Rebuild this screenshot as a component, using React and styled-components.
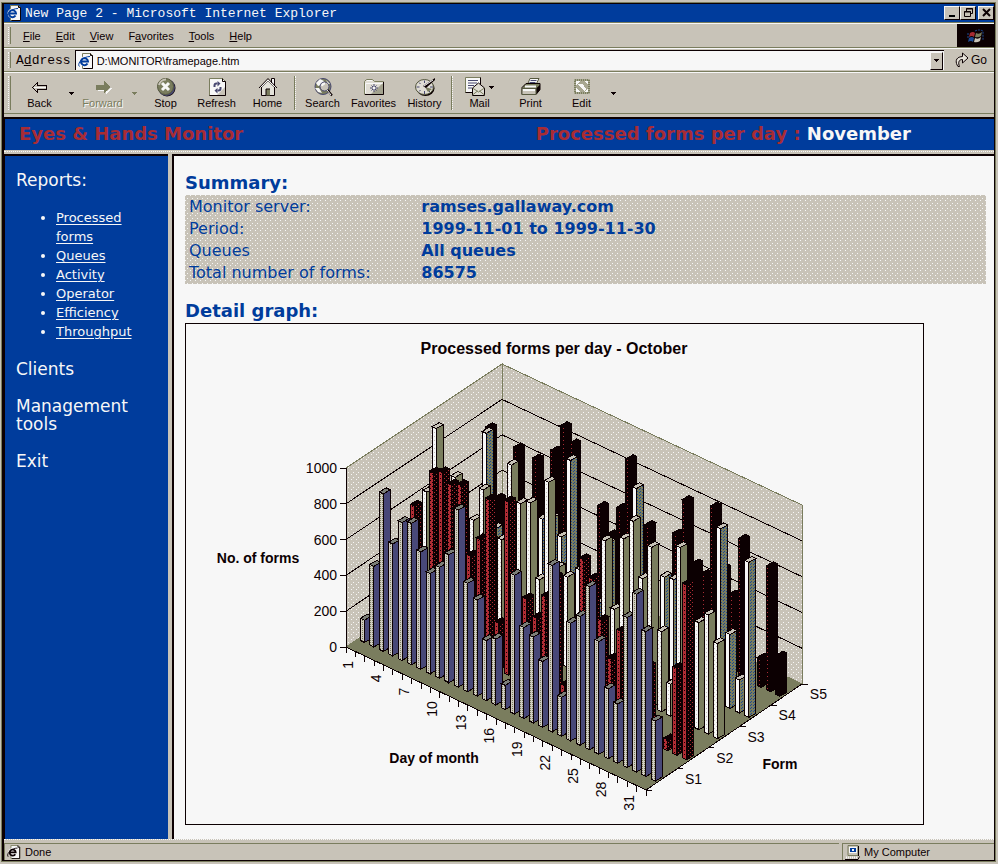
import React, { Component } from 'react';

import styled, { createGlobalStyle } from 'styled-components';

const series = [
  {
    name: "S1",
    front: "url(#mesh)",
    side: "#484878",
    top: "#7c7f78",
    values: [125, 450, 880, 625, 770, 790, 655, 560, 620, 715, 990, 605, 536, 335, 368, 135,
      775, 508, 480, 368, 930, 218, 657, 720, 910, 630, 390, 330, 838, 994, 810, 335]
  },
  {
    name: "S2",
    front: "url(#red)",
    side: "url(#darkRed)",
    top: "#0c0002",
    values: [0, 200, 693, 300, 927, 955, 910, 933, 564, 681, 927, 262, 966, 0, 475, 391,
      536, 670, 90, 0, 843, 760, 553, 363, 542, 0, 0, 419, 0, 61, 486, 977]
  },
  {
    name: "S3",
    front: "url(#paper)",
    side: "#7a7d5e",
    top: "#c8c3b8",
    values: [603, 983, 500, 760, 335, 570, 765, 500, 536, 978, 788, 816, 413, 983, 530, 503,
      0, 0, 0, 805, 447, 866, 989, 693, 894, 447, 179, 967, 0, 598, 665, 531]
  },
  {
    name: "S4",
    front: "#f7f7f7",
    side: "url(#sea)",
    top: "#c8c3b8",
    values: [0, 0, 368, 888, 380, 0, 0, 0, 0, 558, 587, 508, 961, 374, 0, 235,
      598, 0, 0, 978, 0, 0, 558, 570, 0, 156, 0, 0, 978, 413, 184, 866]
  },
  {
    name: "S5",
    front: "url(#ember)",
    side: "#0c0002",
    top: "#0c0002",
    values: [720, 352, 0, 682, 0, 670, 0, 765, 927, 855, 0, 0, 581, 447, 620, 916,
      0, 598, 0, 0, 626, 838, 508, 475, 877, 559, 436, 771, 0, 156, 693, 218]
  }
];

// chart geometry, the floor starts in its left corner
const left = 160;
const floor = 323;
const wall = 179;
const backWall = 177;
const days = 32;
const dayX = 300 / days;
const dayY = 143 / days;
const rowX = 31.2;
const rowY = -21.2;

const at = (day, row) => [left + day * dayX + row * rowX, floor + day * dayY + row * rowY];
const pts = list => list.map(p => p.join(",")).join(" ");

const Bar = ({ day, row, value, look }) => {
  const [cx, cy] = at(day, row);
  const x = cx + 14.5;
  const y = cy - 6.5;
  const h = value * wall / 1000;
  return (
    <g stroke="#0c0002">
      <polygon fill={look.side} points={pts([[x + 4, y + 2], [x + 11, y - 2], [x + 11, y - 2 - h], [x + 4, y + 2 - h]])} />
      <polygon fill={look.front} points={pts([[x, y], [x + 4, y + 2], [x + 4, y + 2 - h], [x, y - h]])} />
      <polygon fill={look.top} points={pts([[x, y - h], [x + 4, y + 2 - h], [x + 11, y - 2 - h], [x + 7, y - 4 - h]])} />
    </g>
  );
};

const Dots = ({ id, size, base, color, spots }) => (
  <pattern id={id} width={size} height={size} patternUnits="userSpaceOnUse">
    <rect width={size} height={size} fill={base} />
    {spots.map(([x, y]) => <rect key={x + "-" + y} x={x} y={y} width="1" height="1" fill={color} />)}
  </pattern>
);

const Chart = () => {
  const [bx, by] = at(0, 5);
  const [rx, ry] = at(days, 5);
  const [fx, fy] = at(days, 0);
  const ticks = [];
  for (let i = 0; i <= days; i++) ticks.push(i);

  return (
    <ChartSvg viewBox="0 0 737 500" role="img" aria-label="Processed forms per day">
      <defs>
        <Dots id="grain" size={5} base="#c8c3b8" color="#f7f7f7" spots={[[0, 0], [2, 3]]} />
        <Dots id="mesh" size={2} base="#d0ccc2" color="#7a7d5e" spots={[[0, 0]]} />
        <Dots id="red" size={4} base="#b02c34" color="#0c0002" spots={[[0, 0], [2, 2]]} />
        <Dots id="darkRed" size={4} base="#0c0002" color="#b02c34" spots={[[0, 0], [2, 2]]} />
        <Dots id="ember" size={4} base="#0c0002" color="#a82c34" spots={[[1, 0]]} />
        <Dots id="paper" size={4} base="#f7f7f7" color="#c8c3b8" spots={[[0, 0], [2, 2]]} />
        <Dots id="sea" size={3} base="#7a7d5e" color="#1c4a94" spots={[[0, 0], [1, 2]]} />
      </defs>

      <g shapeRendering="crispEdges">
        <polygon fill="url(#grain)" stroke="#7a7d5e"
          points={pts([[left, floor], [bx, by], [bx, by - backWall], [left, floor - wall]])} />
        <polygon fill="url(#grain)" stroke="#7a7d5e"
          points={pts([[bx, by], [rx, ry], [rx, ry - wall], [bx, by - backWall]])} />
        <polygon fill="#7a7d5e" points={pts([[left, floor], [bx, by], [rx, ry], [fx, fy]])} />
        {[200, 400, 600, 800].map(v => {
          const up = v * wall / 1000;
          return (
            <polyline key={v} fill="none" stroke="#0c0002"
              points={pts([[left, floor - up], [bx, by - v * backWall / 1000], [rx, ry - up]])} />
          );
        })}
        <polyline fill="none" stroke="#0c0002"
          points={pts([[left, floor - wall], [left, floor], [fx, fy], [rx, ry]])} />

        {[0, 200, 400, 600, 800, 1000].map(v => (
          <line key={v} x1={left - 6} x2={left} y1={floor - v * wall / 1000} y2={floor - v * wall / 1000} stroke="#0c0002" />
        ))}
        {ticks.map(i => {
          const [x, y] = at(i, 0);
          return <line key={i} x1={x} x2={x} y1={y} y2={y + 6} stroke="#0c0002" />;
        })}
        {[0, 1, 2, 3, 4, 5].map(i => {
          const [x, y] = at(days, i);
          return <line key={i} x1={x} x2={x + 6} y1={y} y2={y} stroke="#0c0002" />;
        })}

        {series.map((look, row) => ({ look, row })).reverse().map(({ look, row }) => (
          look.values.map((value, day) => (
            value > 0 && <Bar key={look.name + day} day={day} row={row} value={value} look={look} />
          ))
        ))}
      </g>

      {[0, 200, 400, 600, 800, 1000].map(v => (
        <ChartLabel key={v} x={left - 9} y={floor - v * wall / 1000 + 5} textAnchor="end">{v}</ChartLabel>
      ))}
      {[1, 4, 7, 10, 13, 16, 19, 22, 25, 28, 31].map(d => {
        const [x, y] = at(d - 1, 0);
        return (
          <ChartLabel key={d} textAnchor="end" transform={`translate(${x + 7} ${y + 14}) rotate(-90)`}>{d}</ChartLabel>
        );
      })}
      {series.map((s, i) => {
        const [x, y] = at(days, i);
        return <ChartLabel key={s.name} x={x + 39} y={y - 6}>{s.name}</ChartLabel>;
      })}

      <ChartTitle x="368" y="30" textAnchor="middle">Processed forms per day - October</ChartTitle>
      <AxisTitle x="72" y="239" textAnchor="middle">No. of forms</AxisTitle>
      <AxisTitle x="248" y="439" textAnchor="middle">Day of month</AxisTitle>
      <AxisTitle x="594" y="445" textAnchor="middle">Form</AxisTitle>
    </ChartSvg>
  );
};

const PageIcon = ({ size, ink }) => (
  <svg width={size} height={size} viewBox="0 0 16 16">
    <path d="M4.500 .5h8l2 2v13h-10z" fill="#f7f7f7" stroke="#7a7d5e" />
    <path d="M12.500 .5v2h2v13h-9" fill="none" stroke="#0c0002" />
    <circle cx="6.500" cy="8.500" r="5" fill="#f7f7f7" />
    <path d="M9.500 10.500A3.500 3.500 0 1 1 10 8.500H4" fill="none" stroke={ink || "#003c9c"} strokeWidth="2" />
    <path d="M1.500 13.500C-1.500 11 4.500 3.500 12 3.500" fill="none" stroke={ink || "#003c9c"} />
  </svg>
);

const BackIcon = () => (
  <Glyph viewBox="0 0 20 20" shapeRendering="crispEdges">
    <path d="M2.500 10.500l5-5v3h9v4h-9v3z" fill="#c8c3b8" stroke="#0c0002" />
    <path d="M4 10h12" stroke="#f7f7f7" />
  </Glyph>
);

const ForwardIcon = () => (
  <Glyph viewBox="0 0 20 20" shapeRendering="crispEdges">
    <path d="M18.500 11l-5 5v-3h-9" fill="none" stroke="#f7f7f7" />
    <path d="M17 10l-6-6v4H3v5h8v4z" fill="#7a7d5e" />
  </Glyph>
);

const StopIcon = () => (
  <Glyph viewBox="0 0 20 20">
    <circle cx="11" cy="11" r="8.500" fill="#0c0002" />
    <circle cx="10.500" cy="10.500" r="8.500" fill="#484870" />
    <circle cx="9.500" cy="9.500" r="8" fill="#7a7d5e" stroke="#56583f" />
    <path d="M3 8a7 7 0 0 1 7-5.500" stroke="#c8c3b8" strokeWidth="2" fill="none" />
    <path d="M6 6l7 7M13 6l-7 7" stroke="#f7f7f7" strokeWidth="3" />
  </Glyph>
);

const RefreshIcon = () => (
  <Glyph viewBox="0 0 20 20">
    <path d="M2.500 1.500h13l3 3v14h-16z" fill="#f7f7f7" stroke="#7a7d5e" />
    <path d="M10 18l8-8v8z" fill="#c8c3b8" />
    <path d="M15.500 1.500v3h3v14h-16" fill="none" stroke="#0c0002" />
    <path d="M7.500 10V8.500q0-2 2-2h1M13.500 10v1.500q0 2-2 2h-1" fill="none" stroke="#484870" strokeWidth="2" />
    <path d="M10.500 4l3 2.500-3 3zM10.500 11l-3 2.500 3 3z" fill="#484870" />
  </Glyph>
);

const HomeIcon = () => (
  <Glyph viewBox="0 0 20 20">
    <path d="M13.500 7V1.500h3V10" fill="#f7f7f7" stroke="#0c0002" />
    <path d="M3.500 10L10 3.500l6.500 6.500v8.500h-13z" fill="#e4e2da" stroke="#0c0002" />
    <path d="M1 11l9-9.500 9 9.500" fill="none" stroke="#0c0002" />
    <path d="M2.500 10.500L10 3l7.500 7.500" fill="none" stroke="#f7f7f7" />
    <rect x="8" y="12" width="4" height="6.500" fill="#7a7d5e" />
    <path d="M8 18v-6h4" fill="none" stroke="#0c0002" />
  </Glyph>
);

const SearchIcon = () => (
  <Glyph viewBox="0 0 20 20">
    <circle cx="10" cy="9.500" r="8" fill="#7a7d5e" stroke="#484870" />
    <path d="M3 6l4-4 4 2-2 4-4 1zM2 11l4 0 3 5-4-1zM13 3l4 4-2 0z" fill="#f7f7f7" />
    <circle cx="11.500" cy="9.500" r="4.500" fill="#c8c3b8" stroke="#484870" />
    <path d="M9 9a3 3 0 0 1 3-2.500" stroke="#f7f7f7" strokeWidth="2" fill="none" />
    <path d="M14.500 13l4.500 5.500" stroke="#0c0002" strokeWidth="2" />
    <path d="M14 13l4 5" stroke="#f7f7f7" />
  </Glyph>
);

const FavoritesIcon = () => (
  <Glyph viewBox="0 0 20 20">
    <path d="M.5 17.500V4.500l2-2h6l2 2h9v13z" fill="#e0ddd4" stroke="#7a7d5e" />
    <path d="M19 6v11H7z" fill="#a3a28e" />
    <path d="M1.500 16V6.500h17M3 3.500h5" fill="none" stroke="#f7f7f7" />
    <path d="M1 17.500h18.500V5" fill="none" stroke="#0c0002" />
    <path d="M10 7v8M6 11h8M7.500 8.500l5 5M12.500 8.500l-5 5" stroke="#484870" />
    <rect x="9" y="10" width="2" height="2" fill="#f7f7f7" />
  </Glyph>
);

const HistoryIcon = () => (
  <Glyph viewBox="0 0 20 20">
    <ellipse cx="10.500" cy="11.500" rx="9" ry="7.500" fill="#0c0002" />
    <ellipse cx="9.500" cy="10" rx="9" ry="7.500" fill="#e0ddd4" stroke="#56583f" />
    <path d="M9.500 3.500v2.500M1.500 10h3M15 10h3M9.500 14v3M4 5.500l1.500 1.500M15 15l-1.500-1.500M4 14.500L5.500 13" stroke="#484870" />
    <path d="M10 10l3 5 4-3z" fill="#7a7d5e" />
    <path d="M8 9l3 2 9-8V1z" fill="#0c0002" />
    <path d="M9 9l9-6" stroke="#f7f7f7" />
  </Glyph>
);

const MailIcon = () => (
  <Glyph viewBox="0 0 20 20">
    <path d="M.5 .5h15v15H.5z" fill="#f7f7f7" stroke="#7a7d5e" />
    <path d="M15.500 .5v7M.5 15.500h7" stroke="#0c0002" />
    <path d="M3 3.500h10M3 6h9M3 8.500h6M3 11h4" stroke="#484870" />
    <path d="M7.500 11l6-5 6 5v7.500h-12z" fill="#e0ddd4" stroke="#0c0002" />
    <path d="M7.500 11l6 4 6-4M7.500 18l5-4M19.500 18l-5-4" fill="none" stroke="#7a7d5e" />
  </Glyph>
);

const PrintIcon = () => (
  <Glyph viewBox="0 0 20 20">
    <path d="M6.500 7.500l2.500-6h9l-3 6z" fill="#f7f7f7" stroke="#56583f" />
    <path d="M9.500 3.500h6M8.500 5.500h6" stroke="#484870" />
    <path d="M1 10.500l4-4h14v6l-4 5H1z" fill="#7a7d5e" stroke="#0c0002" />
    <path d="M1 11.500h14v6H1z" fill="#c8c3b8" stroke="#56583f" />
    <path d="M2 13h12M4 9.500h11" stroke="#f7f7f7" strokeWidth="2" />
    <path d="M15.500 17l3.500-4V8l-3.500 3z" fill="#0c0002" />
  </Glyph>
);

const EditIcon = () => (
  <Glyph viewBox="0 0 20 20" shapeRendering="crispEdges">
    <rect x="2" y="2" width="16" height="15" fill="#a8a792" />
    <rect x="3" y="3" width="14" height="13" fill="none" stroke="#7a7d5e" strokeWidth="2" strokeDasharray="1 1" />
    <path d="M4 8V4h4zM12 4h4v4zM4 11v4h4zM16 11v4h-4zM6 7h5l3 5-2 2z" fill="#f7f7f7" />
  </Glyph>
);

const GoIcon = () => (
  <svg width="14" height="16" viewBox="0 0 14 16">
    <path d="M3 14.500C.5 11-.5 5 7.500 4.500V1l5.500 5-5.500 5V7.500C3.500 7.500 3 11 4.500 14.500z" fill="#e6e3da" stroke="#0c0002" />
  </svg>
);

const FlagIcon = () => (
  <svg width="18" height="14" viewBox="0 0 18 14">
    <path d="M3 4q3-2 5 0l-1 4q-2-2-5 0z" fill="#a82c34" />
    <path d="M9 4q3 2 6-1l-1 4q-3 2-6 1z" fill="#7a7d5e" />
    <path d="M2 9q3-2 5 0l-1 4q-2-2-5 0z" fill="#1c4a94" />
    <path d="M8 9q3 2 6-1l-1 4q-3 2-6 1z" fill="#c8c3b8" />
    <path d="M8 2q4-2 8 0v9M1 4v5" fill="none" stroke="#1c4a94" strokeDasharray="2 1" />
  </svg>
);

const ComputerIcon = () => (
  <svg width="15" height="15" viewBox="0 0 15 15">
    <path d="M3 .5h10v10H3z" fill="#c8c3b8" stroke="#7a7d5e" />
    <path d="M13.500 1v10" stroke="#0c0002" />
    <path d="M4 2h8v6H4z" fill="#f7f7f7" />
    <path d="M5 3h6v4H5z" fill="#003c9c" />
    <path d="M7 4h2v2H7z" fill="#f7f7f7" />
    <path d="M1 12.500h12" stroke="#f7f7f7" strokeWidth="2" strokeDasharray="1 1" />
    <path d="M0 14.500h13l1.500-3" fill="none" stroke="#0c0002" />
  </svg>
);

const Caret = ({ color }) => (
  <svg width="5" height="3" viewBox="0 0 5 3" shapeRendering="crispEdges">
    <path d="M0 0h5v1h-1v1h-1v1h-1v-1h-1v-1h-1z" fill={color || "#0c0002"} />
  </svg>
);

const Tool = ({ icon, label, off, drop }) => (
  <ToolButton type="button" disabled={off}>
    <IconLine>
      {icon}
      {drop && <Caret />}
    </IconLine>
    {label}
  </ToolButton>
);

export default class App extends Component {
  constructor(props) {
    super(props);

    this.state = {
      address: "D:\\MONITOR\\framepage.htm"
    };
  }

  handleChange = e => {
    this.setState({ address: e.target.value });
  };

  render() {
    return (
      <Desktop>
        <GlobalStyle />
        <Window>
          <TitleBar>
            <PageIcon size="16" />
            <h1>New Page 2 - Microsoft Internet Explorer</h1>
            <WindowButton type="button" aria-label="Minimize">
              <svg width="11" height="10" viewBox="0 0 11 10"><path d="M2 7h6v2H2z" /></svg>
            </WindowButton>
            <WindowButton type="button" aria-label="Restore">
              <svg width="11" height="10" viewBox="0 0 11 10" fill="none" stroke="#0c0002">
                <path d="M3.500 3V.5h6v5H8M3 1h7M1.500 3.500h6v5h-6zM1 4h7" />
              </svg>
            </WindowButton>
            <WindowButton type="button" aria-label="Close" $apart>
              <svg width="11" height="10" viewBox="0 0 11 10" stroke="#0c0002" strokeWidth="2">
                <path d="M2 1l7 7M9 1l-7 7" />
              </svg>
            </WindowButton>
          </TitleBar>

          <MenuBar>
            <Grip />
            <MenuItem type="button"><u>F</u>ile</MenuItem>
            <MenuItem type="button"><u>E</u>dit</MenuItem>
            <MenuItem type="button"><u>V</u>iew</MenuItem>
            <MenuItem type="button">F<u>a</u>vorites</MenuItem>
            <MenuItem type="button"><u>T</u>ools</MenuItem>
            <MenuItem type="button"><u>H</u>elp</MenuItem>
            <Throbber><FlagIcon /></Throbber>
          </MenuBar>

          <AddressBar>
            <Grip />
            <label htmlFor="address">A<u>d</u>dress</label>
            <AddressBox>
              <PageIcon size="16" />
              <input id="address" type="text" value={this.state.address} onChange={this.handleChange} />
              <DropButton type="button" aria-label="Show addresses"><Caret /></DropButton>
            </AddressBox>
            <GoButton type="button"><GoIcon />Go</GoButton>
          </AddressBar>

          <ToolBar>
            <Grip />
            <Tool icon={<BackIcon />} label="Back" />
            <ToolDrop type="button" aria-label="Back list"><Caret /></ToolDrop>
            <Tool icon={<ForwardIcon />} label="Forward" off />
            <ToolDrop type="button" aria-label="Forward list"><Caret color="#7a7d5e" /></ToolDrop>
            <Tool icon={<StopIcon />} label="Stop" />
            <Tool icon={<RefreshIcon />} label="Refresh" />
            <Tool icon={<HomeIcon />} label="Home" />
            <Divider />
            <Tool icon={<SearchIcon />} label="Search" />
            <Tool icon={<FavoritesIcon />} label="Favorites" />
            <Tool icon={<HistoryIcon />} label="History" />
            <Divider />
            <Tool icon={<MailIcon />} label="Mail" drop />
            <Tool icon={<PrintIcon />} label="Print" />
            <Tool icon={<EditIcon />} label="Edit" />
            <ToolDrop type="button" aria-label="Edit list"><Caret /></ToolDrop>
          </ToolBar>

          <Banner>
            <span>Eyes &amp; Hands Monitor</span>
            <span>Processed forms per day : <b>November</b></span>
          </Banner>

          <Frames>
            <Sidebar>
              <a href="#reports">Reports:</a>
              <ReportList>
                <li><a href="#forms">Processed forms</a></li>
                <li><a href="#queues">Queues</a></li>
                <li><a href="#activity">Activity</a></li>
                <li><a href="#operator">Operator</a></li>
                <li><a href="#efficiency">Efficiency</a></li>
                <li><a href="#throughput">Throughput</a></li>
              </ReportList>
              <a href="#clients">Clients</a>
              <a href="#tools">Management tools</a>
              <a href="#exit">Exit</a>
            </Sidebar>

            <Report>
              <Heading>Summary:</Heading>
              <Summary>
                <tbody>
                  <tr><th scope="row">Monitor server:</th><td>ramses.gallaway.com</td></tr>
                  <tr><th scope="row">Period:</th><td>1999-11-01 to 1999-11-30</td></tr>
                  <tr><th scope="row">Queues</th><td>All queues</td></tr>
                  <tr><th scope="row">Total number of forms:</th><td>86575</td></tr>
                </tbody>
              </Summary>
              <Heading>Detail graph:</Heading>
              <Figure><Chart /></Figure>
            </Report>
          </Frames>

          <StatusBar>
            <StatusPane $grow><PageIcon size="14" ink="#0c0002" />Done</StatusPane>
            <StatusPane><ComputerIcon />My Computer</StatusPane>
          </StatusBar>
        </Window>
      </Desktop>
    );
  }
}

//CSS
const GlobalStyle = createGlobalStyle`
  * {
    box-sizing: border-box;
  }

  body {
    margin: 0;
    background-color: #c8c3b8;
    color: #0c0002;
    font-family: 'Liberation Sans', Arial, sans-serif;
    font-size: 11px;
  }

  button {
    margin: 0;
    padding: 0;
    border: 0;
    background: none;
    color: inherit;
    font: inherit;
  }

  svg {
    display: block;
    flex: none;
  }
`;

const Desktop = styled.div`
  display: flex;
  min-height: 100vh;
  padding: 3px 3px 3px 2px;
`;

const Window = styled.div`
  display: flex;
  flex: 1;
  flex-direction: column;
  min-width: 0;
  border: 1px solid #0c0002;
  border-left-width: 2px;
  box-shadow: 0 0 0 1px #7a7d5e;
`;

const TitleBar = styled.header`
  display: flex;
  align-items: center;
  height: 18px;
  padding: 0 0 0 2px;
  background-color: #003c9c;
  color: #f7f7f7;

  h1 {
    flex: 1;
    margin: 0 0 0 3px;
    font-family: 'Liberation Mono', 'Courier New', monospace;
    font-size: 13px;
    font-weight: normal;
    white-space: nowrap;
  }
`;

const WindowButton = styled.button`
  display: flex;
  align-items: center;
  justify-content: center;
  width: 16px;
  height: 14px;
  margin-left: ${props => (props.$apart ? "2px" : "0")};
  border: 1px solid;
  border-color: #f7f7f7 #0c0002 #0c0002 #f7f7f7;
  background-color: #c8c3b8;
`;

const Band = styled.div`
  display: flex;
  align-items: center;
  padding-left: 4px;
  border-top: 1px solid #7a7d5e;
  box-shadow: inset 0 1px 0 #f7f7f7;
`;

const MenuBar = styled(Band)`
  height: 25px;
  padding-top: 1px;
`;

const AddressBar = styled(Band)`
  height: 24px;
  padding-top: 1px;

  label {
    margin: 0 4px 0 2px;
    font-family: 'Liberation Mono', 'Courier New', monospace;
    font-size: 13px;
  }
`;

const ToolBar = styled(Band)`
  height: 43px;
  padding-top: 1px;
  border-bottom: 1px solid #7a7d5e;
`;

const Grip = styled.span`
  align-self: stretch;
  width: 3px;
  margin: 3px 3px 3px 0;
  border-right: 1px solid #7a7d5e;
  border-left: 1px dotted #f7f7f7;
`;

const MenuItem = styled.button`
  margin: 0 0 0 9px;
  padding: 0 6px 0 0;
`;

const Throbber = styled.span`
  display: flex;
  align-items: center;
  justify-content: center;
  align-self: stretch;
  width: 37px;
  margin-left: auto;
  background-color: #0c0002;
`;

const AddressBox = styled.div`
  display: flex;
  flex: 1;
  align-items: center;
  height: 20px;
  padding: 0 1px 0 2px;
  border-top: 1px solid #0c0002;
  border-left: 1px solid #0c0002;
  background-color: #f7f7f7;

  input {
    flex: 1;
    min-width: 0;
    padding: 0 0 0 3px;
    border: 0;
    outline: 0;
    background: none;
    color: #0c0002;
    font: inherit;
  }
`;

const DropButton = styled.button`
  display: flex;
  align-items: center;
  justify-content: center;
  width: 13px;
  height: 18px;
  border: 1px solid;
  border-color: #f7f7f7 #0c0002 #0c0002 #f7f7f7;
  background-color: #c8c3b8;
`;

const GoButton = styled.button`
  display: flex;
  align-items: center;
  gap: 2px;
  padding: 0 7px 0 11px;
  font-size: 12px;
`;

const ToolButton = styled.button`
  display: flex;
  flex-direction: column;
  align-items: center;
  width: 51px;
  color: ${props => (props.disabled ? "#7a7d5e" : "#0c0002")};
  text-shadow: ${props => (props.disabled ? "1px 1px 0 #f7f7f7" : "none")};
`;

const IconLine = styled.span`
  display: flex;
  align-items: center;
  gap: 4px;
`;

const Glyph = styled.svg`
  width: 20px;
  height: 20px;
`;

const ToolDrop = styled.button`
  display: flex;
  justify-content: center;
  width: 12px;
`;

const Divider = styled.span`
  align-self: stretch;
  width: 2px;
  margin: 3px 1px;
  border-right: 1px dotted #f7f7f7;
  border-left: 1px solid #7a7d5e;
`;

const Banner = styled.div`
  display: grid;
  grid-template-columns: 53% 1fr;
  align-items: center;
  height: 33px;
  margin-top: 3px;
  padding: 0 0 2px 14px;
  border-top: 2px solid #0c0002;
  border-left: 1px solid #0c0002;
  background-color: #003c9c;
  color: #a82c34;
  font-family: 'DejaVu Sans', Verdana, sans-serif;
  font-size: 18px;
  font-weight: bold;
  white-space: nowrap;

  b {
    color: #f7f7f7;
  }
`;

const Frames = styled.div`
  display: flex;
  flex: 1;
  margin-top: 1px;
  padding-top: 2px;
  border-top: 1px dotted #f7f7f7;
  font-family: 'DejaVu Sans', Verdana, sans-serif;
`;

const Sidebar = styled.nav`
  display: flex;
  flex-direction: column;
  flex: none;
  gap: 19px;
  width: 164px;
  padding: 15px 20px 15px 11px;
  border-top: 2px solid #0c0002;
  border-left: 1px solid #0c0002;
  background-color: #003c9c;
  color: #f7f7f7;
  font-size: 17px;
  line-height: 18px;

  > a {
    color: inherit;
    text-decoration: none;
  }
`;

const ReportList = styled.ul`
  margin: 0;
  padding: 0 0 0 40px;
  font-size: 13px;
  line-height: 19px;

  a {
    color: inherit;
    text-underline-offset: 2px;
  }
`;

const Report = styled.main`
  flex: 1;
  min-width: 0;
  margin-left: 4px;
  padding: 15px 8px 14px 11px;
  border-top: 2px solid #0c0002;
  border-left: 2px solid #0c0002;
  background-color: #f7f7f7;
`;

const Heading = styled.h2`
  margin: 0 0 1px;
  color: #003c9c;
  font-size: 18px;
  font-weight: bold;
  line-height: 23px;
`;

const Summary = styled.table`
  width: 100%;
  margin-bottom: 15px;
  border-spacing: 0;
  padding-top: 1px;
  background-color: #c8c3b8;
  background-image:
    conic-gradient(at 1px 1px, transparent 75%, #f7f7f7 0),
    conic-gradient(at 1px 1px, transparent 75%, #f7f7f7 0);
  background-position: 0 0, 2px 3px;
  background-size: 5px 5px;
  color: #003c9c;
  font-size: 16px;
  line-height: 22px;

  th,
  td {
    padding: 0 4px;
    text-align: left;
  }

  th {
    width: 29%;
    font-weight: normal;
  }

  td {
    font-weight: bold;
  }
`;

const Figure = styled.figure`
  max-width: 739px;
  margin: 0;
  border: 1px solid #0c0002;
`;

const ChartSvg = styled.svg`
  width: 100%;
  height: auto;
  fill: #0c0002;
  font-family: 'Liberation Sans', Arial, sans-serif;
`;

const ChartLabel = styled.text`
  font-size: 14px;
`;

const ChartTitle = styled.text`
  font-size: 16px;
  font-weight: bold;
`;

const AxisTitle = styled.text`
  font-size: 14px;
  font-weight: bold;
`;

const StatusBar = styled.footer`
  display: flex;
  gap: 3px;
  height: 21px;
  padding-top: 3px;
  border-top: 1px dotted #f7f7f7;
`;

const StatusPane = styled.div`
  display: flex;
  flex: ${props => (props.$grow ? "1" : "0 0 152px")};
  align-items: center;
  gap: 4px;
  padding-left: 2px;
  border-top: 1px solid #7a7d5e;
  border-left: 1px solid #7a7d5e;
`;
